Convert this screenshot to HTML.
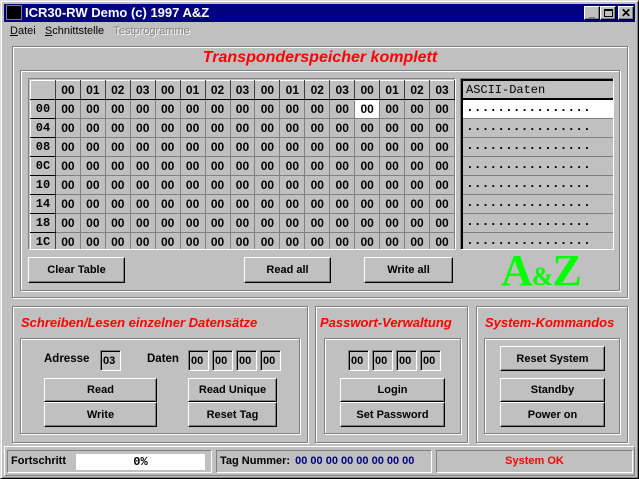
<!DOCTYPE html>
<html><head><meta charset="utf-8"><style>
*{box-sizing:border-box;margin:0;padding:0}
body{width:639px;height:479px;background:#c0c0c0;font-family:"Liberation Sans",sans-serif;font-size:11px;position:relative;overflow:hidden}
.a{position:absolute}
.win{left:0;top:0;width:639px;height:479px;border:1px solid;border-color:#dfdfdf #000 #000 #dfdfdf;box-shadow:inset 1px 1px #fff,inset -1px -1px #808080}
.etch{position:absolute;border:1px solid #808080;box-shadow:1px 1px 0 #fff,inset 1px 1px 0 #fff}
.btn{position:absolute;background:#c0c0c0;border:1px solid;border-color:#fff #000 #000 #fff;box-shadow:inset -1px -1px #808080;font-weight:bold;font-size:11px;text-align:center;display:flex;align-items:center;justify-content:center}
.in{position:absolute;width:21px;height:21px;border:1px solid;border-color:#808080 #fff #fff #808080;box-shadow:inset 1px 1px #000;font-weight:bold;font-size:11px;padding:4px 0 0 2px;font-family:"Liberation Sans",sans-serif}
.red{color:#f00;font-style:italic;font-weight:bold}
table{border-collapse:collapse;position:absolute;left:30px;top:80px}
td{width:25px;height:19px;border:1px solid #808080;font-weight:bold;font-size:12px;text-align:center;padding:0;font-family:"Liberation Sans",sans-serif;line-height:17px}
td.h{border:1px solid;border-color:#fff #404040 #000 #fff;background:#c0c0c0}
td.r{font-family:"Liberation Mono",monospace;font-weight:bold}
.sunk{position:absolute;border:1px solid;border-color:#808080 #fff #fff #808080}
.d{height:19px;border-bottom:1px solid #808080;padding-left:3px;line-height:15px;font-weight:bold;font-size:13px}
</style></head><body>
<div class="a win"></div>
<div class="a" style="left:4px;top:4px;width:631px;height:18px;background:#000080"></div>
<div class="a" style="left:6px;top:5px;width:16px;height:15px;background:#000;border:1px solid #808080"></div>
<div class="a" style="left:25px;top:4px;color:#fff;font-weight:bold;font-size:13px;line-height:18px">ICR30-RW Demo (c) 1997 A&amp;Z</div>
<div class="btn" style="left:584px;top:6px;width:16px;height:14px;font-size:10px;align-items:flex-end">_</div>
<div class="btn" style="left:600px;top:6px;width:16px;height:14px"><div style="width:9px;height:8px;border:1px solid #000;border-top-width:2px"></div></div>
<div class="btn" style="left:618px;top:6px;width:16px;height:14px;font-size:12px">✕</div>
<div class="a" style="left:10px;top:25px;font-size:11px"><u>D</u>atei&nbsp;&nbsp;&nbsp;<u>S</u>chnittstelle&nbsp;&nbsp;&nbsp;<span style="color:#808080;text-shadow:1px 1px #fff">Testprogramme</span></div>

<div class="etch" style="left:12px;top:46px;width:616px;height:252px"></div>
<div class="a red" style="left:12px;top:49px;width:616px;text-align:center;font-size:16px">Transponderspeicher komplett</div>
<div class="etch" style="left:20px;top:70px;width:600px;height:221px"></div>
<div class="sunk" style="left:28px;top:78px;width:428px;height:172px;overflow:hidden;border-color:#808080 #fff #fff #808080">
<table style="left:1px;top:1px">
<tr><td class="h"></td><td class="h">00</td><td class="h">01</td><td class="h">02</td><td class="h">03</td><td class="h">00</td><td class="h">01</td><td class="h">02</td><td class="h">03</td><td class="h">00</td><td class="h">01</td><td class="h">02</td><td class="h">03</td><td class="h">00</td><td class="h">01</td><td class="h">02</td><td class="h">03</td></tr>
<tr><td class="h r">00</td><td>00</td><td>00</td><td>00</td><td>00</td><td>00</td><td>00</td><td>00</td><td>00</td><td>00</td><td>00</td><td>00</td><td>00</td><td style="background:#fff">00</td><td>00</td><td>00</td><td>00</td></tr>
<tr><td class="h r">04</td><td>00</td><td>00</td><td>00</td><td>00</td><td>00</td><td>00</td><td>00</td><td>00</td><td>00</td><td>00</td><td>00</td><td>00</td><td>00</td><td>00</td><td>00</td><td>00</td></tr>
<tr><td class="h r">08</td><td>00</td><td>00</td><td>00</td><td>00</td><td>00</td><td>00</td><td>00</td><td>00</td><td>00</td><td>00</td><td>00</td><td>00</td><td>00</td><td>00</td><td>00</td><td>00</td></tr>
<tr><td class="h r">0C</td><td>00</td><td>00</td><td>00</td><td>00</td><td>00</td><td>00</td><td>00</td><td>00</td><td>00</td><td>00</td><td>00</td><td>00</td><td>00</td><td>00</td><td>00</td><td>00</td></tr>
<tr><td class="h r">10</td><td>00</td><td>00</td><td>00</td><td>00</td><td>00</td><td>00</td><td>00</td><td>00</td><td>00</td><td>00</td><td>00</td><td>00</td><td>00</td><td>00</td><td>00</td><td>00</td></tr>
<tr><td class="h r">14</td><td>00</td><td>00</td><td>00</td><td>00</td><td>00</td><td>00</td><td>00</td><td>00</td><td>00</td><td>00</td><td>00</td><td>00</td><td>00</td><td>00</td><td>00</td><td>00</td></tr>
<tr><td class="h r">18</td><td>00</td><td>00</td><td>00</td><td>00</td><td>00</td><td>00</td><td>00</td><td>00</td><td>00</td><td>00</td><td>00</td><td>00</td><td>00</td><td>00</td><td>00</td><td>00</td></tr>
<tr><td class="h r">1C</td><td>00</td><td>00</td><td>00</td><td>00</td><td>00</td><td>00</td><td>00</td><td>00</td><td>00</td><td>00</td><td>00</td><td>00</td><td>00</td><td>00</td><td>00</td><td>00</td></tr>
</table></div>
<div class="sunk" style="left:460px;top:78px;width:154px;height:172px;overflow:hidden">
<div style="border-left:2px solid #000;border-top:2px solid #000;height:170px;font-family:'Liberation Mono',monospace;font-size:12px">
<div style="height:19px;border-bottom:2px solid #000;padding:2px 0 0 3px">ASCII-Daten</div>
<div class="d" style="background:#fff">................</div>
<div class="d">................</div>
<div class="d">................</div>
<div class="d">................</div>
<div class="d">................</div>
<div class="d">................</div>
<div class="d">................</div>
<div class="d" style="border:0">................</div>
</div></div>
<div class="btn" style="left:28px;top:257px;width:97px;height:26px">Clear Table</div>
<div class="btn" style="left:244px;top:257px;width:87px;height:26px">Read all</div>
<div class="btn" style="left:364px;top:257px;width:89px;height:26px">Write all</div>
<div class="a" style="left:501px;top:250px;color:#00ff00;font-family:'Liberation Serif',serif;font-weight:bold;font-size:44px;line-height:42px;letter-spacing:-1px">A<span style="font-size:26px">&amp;</span>Z</div>

<div class="etch" style="left:12px;top:306px;width:296px;height:137px"></div>
<div class="a red" style="left:21px;top:315px;font-size:13px">Schreiben/Lesen einzelner Datensätze</div>
<div class="etch" style="left:20px;top:338px;width:280px;height:96px"></div>
<div class="a" style="left:44px;top:353px;font-weight:bold;font-size:11.5px">Adresse</div>
<div class="in" style="left:100px;top:350px">03</div>
<div class="a" style="left:147px;top:353px;font-weight:bold;font-size:11.5px">Daten</div>
<div class="in" style="left:188px;top:350px">00</div><div class="in" style="left:212px;top:350px">00</div><div class="in" style="left:236px;top:350px">00</div><div class="in" style="left:260px;top:350px">00</div>
<div class="btn" style="left:44px;top:378px;width:113px;height:24px">Read</div>
<div class="btn" style="left:44px;top:402px;width:113px;height:25px">Write</div>
<div class="btn" style="left:188px;top:378px;width:89px;height:24px">Read Unique</div>
<div class="btn" style="left:188px;top:402px;width:89px;height:25px">Reset Tag</div>

<div class="etch" style="left:315px;top:306px;width:153px;height:137px"></div>
<div class="a red" style="left:320px;top:315px;font-size:13px">Passwort-Verwaltung</div>
<div class="etch" style="left:324px;top:338px;width:137px;height:96px"></div>
<div class="in" style="left:348px;top:350px">00</div><div class="in" style="left:372px;top:350px">00</div><div class="in" style="left:396px;top:350px">00</div><div class="in" style="left:420px;top:350px">00</div>
<div class="btn" style="left:340px;top:378px;width:105px;height:24px">Login</div>
<div class="btn" style="left:340px;top:402px;width:105px;height:25px">Set Password</div>

<div class="etch" style="left:476px;top:306px;width:152px;height:137px"></div>
<div class="a red" style="left:485px;top:315px;font-size:13px">System-Kommandos</div>
<div class="etch" style="left:484px;top:338px;width:136px;height:96px"></div>
<div class="btn" style="left:500px;top:346px;width:105px;height:25px">Reset System</div>
<div class="btn" style="left:500px;top:378px;width:105px;height:24px">Standby</div>
<div class="btn" style="left:500px;top:402px;width:105px;height:25px">Power on</div>

<div class="a" style="left:4px;top:446px;width:631px;height:30px;border:1px solid;border-color:#fff #808080 #808080 #fff"></div>
<div class="sunk" style="left:7px;top:450px;width:205px;height:23px;border-color:#808080 #fff #fff #808080"></div>
<div class="a" style="left:11px;top:455px;font-weight:bold">Fortschritt</div>
<div class="a" style="left:76px;top:454px;width:129px;height:16px;background:#fff;text-align:center;font-weight:bold;font-family:'Liberation Mono',monospace;font-size:12px;line-height:16px">0%</div>
<div class="sunk" style="left:216px;top:450px;width:216px;height:23px"></div>
<div class="a" style="left:220px;top:455px;font-weight:bold">Tag Nummer: <span style="color:#000080;margin-left:2px">00 00 00 00 00 00 00 00</span></div>
<div class="sunk" style="left:436px;top:450px;width:197px;height:23px"></div>
<div class="a" style="left:436px;top:455px;width:197px;text-align:center;font-weight:bold;color:#f00">System OK</div>
</body></html>
